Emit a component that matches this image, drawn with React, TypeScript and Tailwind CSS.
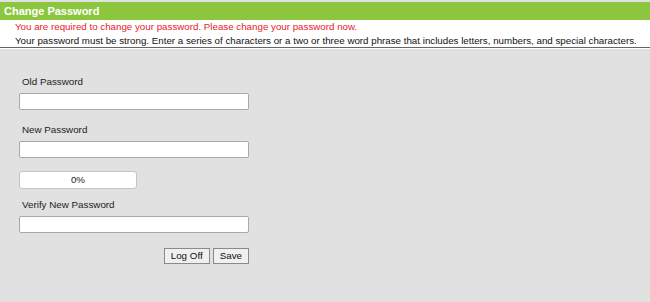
import { useState } from "react";

const Field: React.FC<{ label: string; value: string; onChange: (v: string) => void }> = ({
	label,
	value,
	onChange,
}) => (
	<div className="flex flex-col">
		<label className="h-[14px] pl-[3px] text-[9.8px] leading-[14px] text-[#222]">{label}</label>
		<input
			type="password"
			value={value}
			onChange={(e) => onChange(e.target.value)}
			className="mt-[4px] h-[17px] w-[230px] rounded-[2px] border border-[#a9a9a9] bg-white px-1 text-[10px] outline-none"
		/>
	</div>
);

export default function App() {
	const [oldPw, setOldPw] = useState("");
	const [newPw, setNewPw] = useState("");
	const [verifyPw, setVerifyPw] = useState("");

	return (
		<div className="flex h-[302px] w-[650px] flex-col bg-[#e1e1e1] font-['Liberation_Sans',Arial,sans-serif]">
			<div className="mt-[2px] flex h-[18px] items-center bg-[#8cc63e] px-[4px]">
				<h1 className="text-[11px] font-bold text-white">Change Password</h1>
			</div>
			<div className="flex h-[28px] flex-col border-b border-[#666] bg-white pl-[15px] text-[9.75px] leading-[14px]">
				<p className="text-[#e8202a]">You are required to change your password. Please change your password now.</p>
				<p className="text-[#111]">Your password must be strong. Enter a series of characters or a two or three word phrase that includes letters, numbers, and special characters.</p>
			</div>
			<div className="h-px bg-white" />
			<div className="flex w-[250px] flex-col pl-[19px] pt-[26px]">
				<Field label="Old Password" value={oldPw} onChange={setOldPw} />
				<div className="mt-[13px]">
					<Field label="New Password" value={newPw} onChange={setNewPw} />
				</div>
				<div className="mt-[13px] flex h-[18px] w-[118px] items-center justify-center rounded-[3px] border border-[#c4c4c4] bg-white text-[9.8px] text-[#222]">
					0%
				</div>
				<div className="mt-[9px]">
					<Field label="Verify New Password" value={verifyPw} onChange={setVerifyPw} />
				</div>
				<div className="mt-[15px] flex w-[230px] justify-end gap-[3px]">
					<button className="h-[16px] border border-[#8a8a8a] bg-[#f0f0f0] px-[6px] text-[9.8px] leading-[14px] text-[#111]">
						Log Off
					</button>
					<button className="h-[16px] border border-[#8a8a8a] bg-[#f0f0f0] px-[6px] text-[9.8px] leading-[14px] text-[#111]">
						Save
					</button>
				</div>
			</div>
		</div>
	);
}
